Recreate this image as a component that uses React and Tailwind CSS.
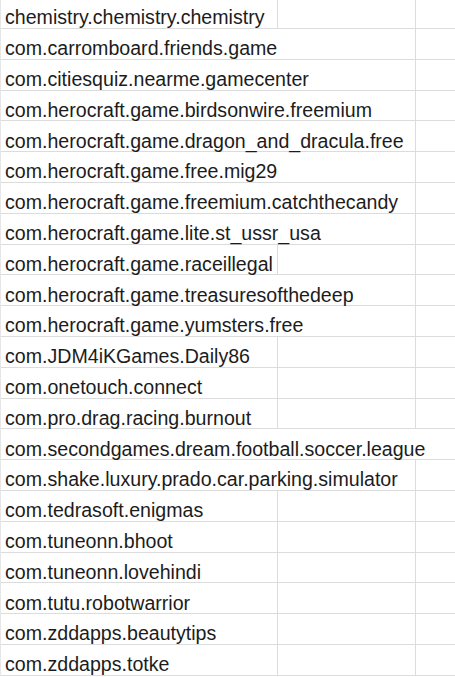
import React from "react";

const rows = [
  ["chemistry.chemistry.chemistry", 1],
  ["com.carromboard.friends.game", 2],
  ["com.citiesquiz.nearme.gamecenter", 2],
  ["com.herocraft.game.birdsonwire.freemium", 2],
  ["com.herocraft.game.dragon_and_dracula.free", 2],
  ["com.herocraft.game.free.mig29", 2],
  ["com.herocraft.game.freemium.catchthecandy", 2],
  ["com.herocraft.game.lite.st_ussr_usa", 2],
  ["com.herocraft.game.raceillegal", 1],
  ["com.herocraft.game.treasuresofthedeep", 2],
  ["com.herocraft.game.yumsters.free", 2],
  ["com.JDM4iKGames.Daily86", 1],
  ["com.onetouch.connect", 1],
  ["com.pro.drag.racing.burnout", 1],
  ["com.secondgames.dream.football.soccer.league", 3],
  ["com.shake.luxury.prado.car.parking.simulator", 2],
  ["com.tedrasoft.enigmas", 1],
  ["com.tuneonn.bhoot", 1],
  ["com.tuneonn.lovehindi", 1],
  ["com.tutu.robotwarrior", 1],
  ["com.zddapps.beautytips", 1],
  ["com.zddapps.totke", 1],
];

const App = () => {
  return (
    <div
      className="w-[455px] h-[677px] bg-white overflow-hidden text-[#1c1c1c]"
      style={{ fontFamily: '"Liberation Sans", Arial, sans-serif' }}
    >
      <div className="border-l border-[#e6e6e6]">
        {rows.map(([name, span], i) => (
          <div
            key={name}
            className={
              "flex border-b border-[#dcdcdc] " +
              (i === 0 ? "h-[29px]" : "h-[30.8px]")
            }
          >
            <div
              className={
                "flex items-end pl-[4px] whitespace-nowrap text-[19.6px] leading-none shrink-0 " +
                (span === 1
                  ? "w-[277px] border-r border-[#dcdcdc]"
                  : span === 2
                  ? "w-[415px] border-r border-[#dcdcdc]"
                  : "w-[460px]")
              }
            >
              {name}
            </div>
            {span === 1 && (
              <div className="w-[138px] shrink-0 border-r border-[#dcdcdc]"></div>
            )}
            {span < 3 && <div className="grow"></div>}
          </div>
        ))}
      </div>
    </div>
  );
};

export default App;
